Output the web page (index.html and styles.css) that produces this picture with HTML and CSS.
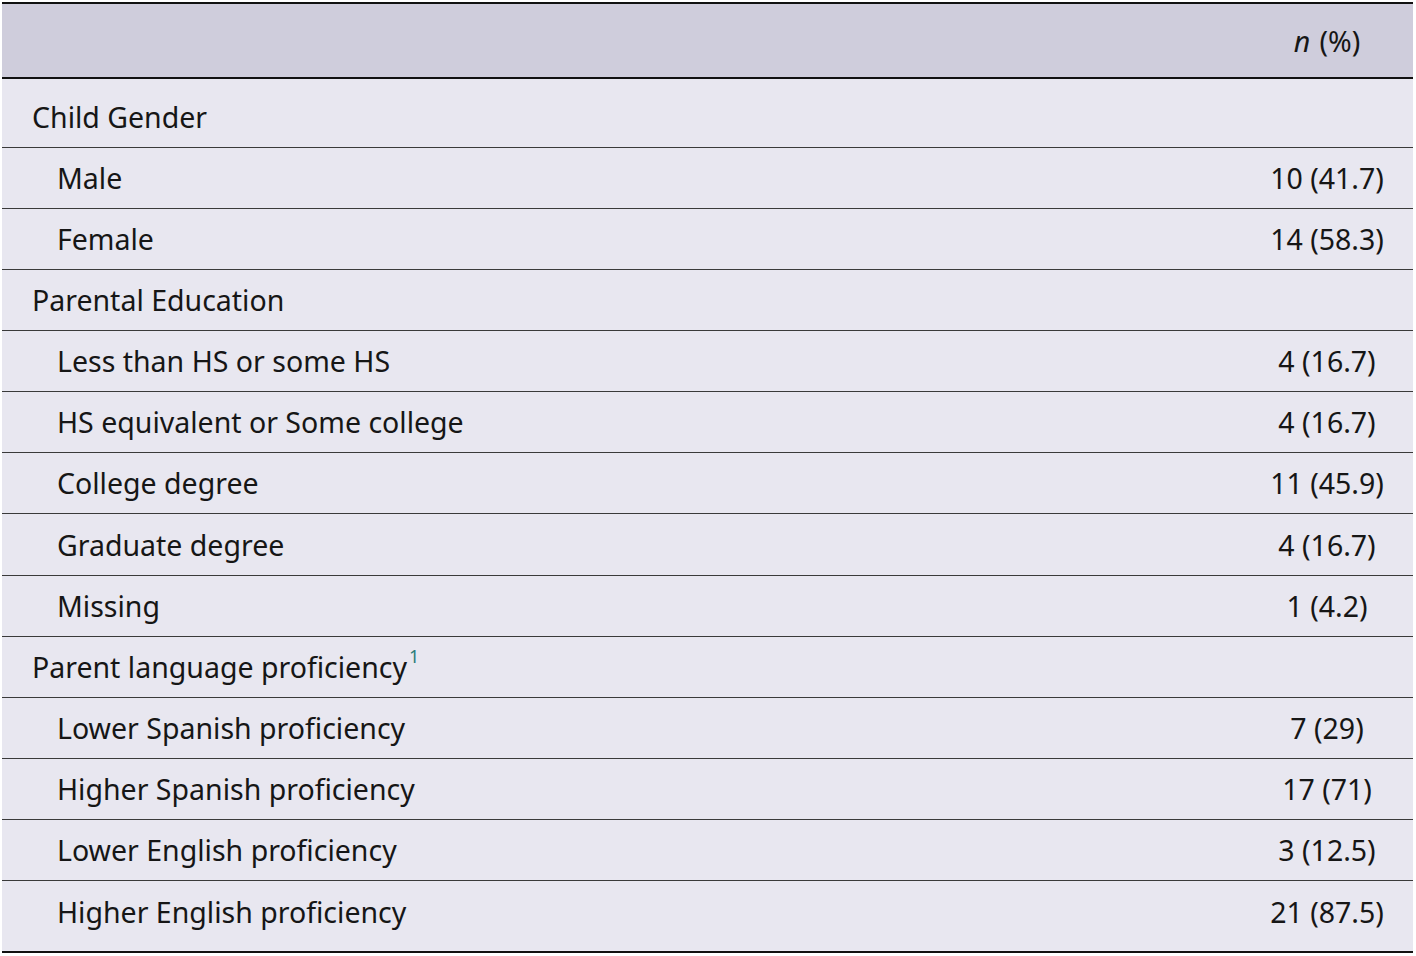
FILE: index.html
```html
<!DOCTYPE html>
<html lang="en">
<head>
<meta charset="utf-8">
<title>Table</title>
<link rel="stylesheet" href="styles.css">
</head>
<body>
<table class="data">
  <thead>
    <tr><th class="label"></th><th class="val"><i>n</i> (%)</th></tr>
  </thead>
  <tbody>
    <tr class="first"><td class="sec">Child Gender</td><td class="val"></td></tr>
    <tr><td class="sub">Male</td><td class="val">10 (41.7)</td></tr>
    <tr><td class="sub">Female</td><td class="val">14 (58.3)</td></tr>
    <tr><td class="sec">Parental Education</td><td class="val"></td></tr>
    <tr><td class="sub">Less than HS or some HS</td><td class="val">4 (16.7)</td></tr>
    <tr><td class="sub">HS equivalent or Some college</td><td class="val">4 (16.7)</td></tr>
    <tr><td class="sub">College degree</td><td class="val">11 (45.9)</td></tr>
    <tr><td class="sub">Graduate degree</td><td class="val">4 (16.7)</td></tr>
    <tr><td class="sub">Missing</td><td class="val">1 (4.2)</td></tr>
    <tr><td class="sec">Parent language proficiency<sup class="fn">1</sup></td><td class="val"></td></tr>
    <tr><td class="sub">Lower Spanish proficiency</td><td class="val">7 (29)</td></tr>
    <tr><td class="sub">Higher Spanish proficiency</td><td class="val">17 (71)</td></tr>
    <tr><td class="sub">Lower English proficiency</td><td class="val">3 (12.5)</td></tr>
    <tr class="last"><td class="sub">Higher English proficiency</td><td class="val">21 (87.5)</td></tr>
  </tbody>
</table>
</body>
</html>
```
FILE: styles.css
```css
html, body {
  margin: 0;
  padding: 0;
  background: #ffffff;
}
body {
  padding: 2px 0 0 2px;
  font-family: "Noto Sans", "Open Sans", sans-serif;
  color: #161616;
}
.data {
  width: 1411px;
  border-collapse: collapse;
  font-size: 28.5px;
  line-height: 36px;
  border-top: 2px solid #111;
  border-bottom: 2px solid #111;
}
.data thead tr {
  background: #cfcddc;
  height: 75px;
  border-bottom: 2px solid #111;
}
.data th {
  font-weight: normal;
  padding: 0;
  vertical-align: top;
  padding-top: 19px;
}
.data th i {
  margin-right: 2px;
}
.data tbody tr {
  background: #e8e7f0;
  height: 61.17px;
  border-bottom: 1px solid #3a3a3a;
}
.data tbody tr.last {
  border-bottom: none;
}
.data td {
  padding: 0;
  vertical-align: middle;
}
.data tbody tr.first td {
  padding-top: 9px;
}
.data tbody tr.last td {
  padding-bottom: 8px;
}
.data tbody tr.first { height: 69px; }
.data tbody tr.last { height: 71px; }
.sec {
  padding-left: 30px !important;
}
.sub {
  padding-left: 55px !important;
}
.val {
  width: 172px;
  text-align: center;
}
.fn {
  font-size: 18px;
  color: #2c7d7a;
  vertical-align: top;
  line-height: 18px;
  position: relative;
  top: -2px;
  margin-left: 2px;
}
```
